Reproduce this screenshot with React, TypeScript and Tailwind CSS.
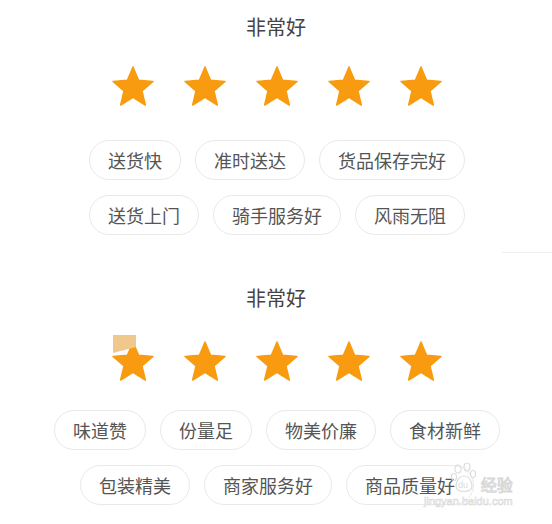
import React from "react";

const FONT = { fontFamily: '"Noto Sans CJK SC", "Noto Sans", sans-serif' };

const sections = [
  {
    title: "非常好",
    rows: [
      ["送货快", "准时送达", "货品保存完好"],
      ["送货上门", "骑手服务好", "风雨无阻"],
    ],
  },
  {
    title: "非常好",
    rows: [
      ["味道赞", "份量足", "物美价廉", "食材新鲜"],
      ["包装精美", "商家服务好", "商品质量好"],
    ],
  },
];

// 5-point star, 42x40
const STAR_POINTS = (() => {
  const cx = 21;
  const cy = 22;
  const R = 21;
  const r = R * 0.45;
  const pts: string[] = [];
  for (let i = 0; i < 10; i++) {
    const rad = i % 2 === 0 ? R : r;
    const a = (-90 + i * 36) * (Math.PI / 180);
    pts.push(`${(cx + rad * Math.cos(a)).toFixed(2)},${(cy + rad * Math.sin(a)).toFixed(2)}`);
  }
  return pts.join(" ");
})();

const Star = ({ pressed = false }: { pressed?: boolean }) => (
  <svg width="42" height="40" viewBox="0 0 42 40" className="block overflow-visible">
    <polygon
      points={STAR_POINTS}
      fill="#f89b10"
      stroke="#f89b10"
      strokeWidth="1.5"
      strokeLinejoin="round"
    />
    {pressed && <polygon points="1,-6 24,-6 24,6 1,12" fill="#f1c88c" />}
  </svg>
);

const Tag = ({ label }: { label: string }) => (
  <span className="flex h-[40px] items-center rounded-full border border-[#e9e9e9] bg-white px-[18px] text-[18px] leading-none text-[#555]">
    {label}
  </span>
);

export default function App() {
  return (
    <div
      className="relative flex h-[524px] w-[552px] flex-col overflow-hidden bg-white"
      style={FONT}
    >
      {sections.map((section, si) => (
        <React.Fragment key={si}>
          {si === 1 && (
            <div className="mt-[17px] flex justify-end">
              <div className="h-px w-[50px] bg-[#efefef]" />
            </div>
          )}
          <h2
            className={`${si === 0 ? "mt-[13px]" : "mt-[31px]"} text-center text-[20px] leading-[28px] text-[#444]`}
          >
            {section.title}
          </h2>
          <div
            className={`${si === 0 ? "mt-[25px]" : "mt-[29px]"} flex justify-center gap-[30px] pl-[2px]`}
          >
            {[0, 1, 2, 3, 4].map((i) => (
              <Star key={i} pressed={si === 1 && i === 0} />
            ))}
          </div>
          <div
            className={`${si === 0 ? "mt-[34px]" : "mt-[29px]"} flex flex-col gap-[15px]`}
          >
            {section.rows.map((row, ri) => (
              <div key={ri} className="flex justify-center gap-[14px] pl-[2px]">
                {row.map((t) => (
                  <Tag key={t} label={t} />
                ))}
              </div>
            ))}
          </div>
        </React.Fragment>
      ))}

      {/* watermark */}
      <div className="pointer-events-none absolute left-[424px] top-[463px] flex flex-col items-end">
        <div className="flex items-end gap-[4px]">
          <svg width="26" height="30" viewBox="0 0 26 30">
            <g fill="none" stroke="#dcdcdc" strokeWidth="1.2">
              <ellipse cx="7" cy="6" rx="3" ry="4" />
              <ellipse cx="16" cy="4" rx="3" ry="4" />
              <ellipse cx="3" cy="14" rx="2.5" ry="3.5" />
              <ellipse cx="22" cy="11" rx="2.5" ry="3.5" />
              <path d="M13 13 C 6 13 3 24 7 27 C 10 29 16 29 19 27 C 23 24 20 13 13 13 Z" />
            </g>
            <text x="7" y="25" fontSize="9" fill="#dcdcdc" fontFamily="Liberation Sans, sans-serif">
              du
            </text>
          </svg>
          <span className="text-[16px] leading-[18px] text-white [-webkit-text-stroke:1px_#d8d8d8]">
            经验
          </span>
        </div>
        <span
          className="mt-[2px] text-[11px] leading-[12px] text-white [-webkit-text-stroke:0.6px_#d8d8d8]"
          style={{ fontFamily: '"Liberation Sans", sans-serif' }}
        >
          jingyan.baidu.com
        </span>
      </div>
    </div>
  );
}
